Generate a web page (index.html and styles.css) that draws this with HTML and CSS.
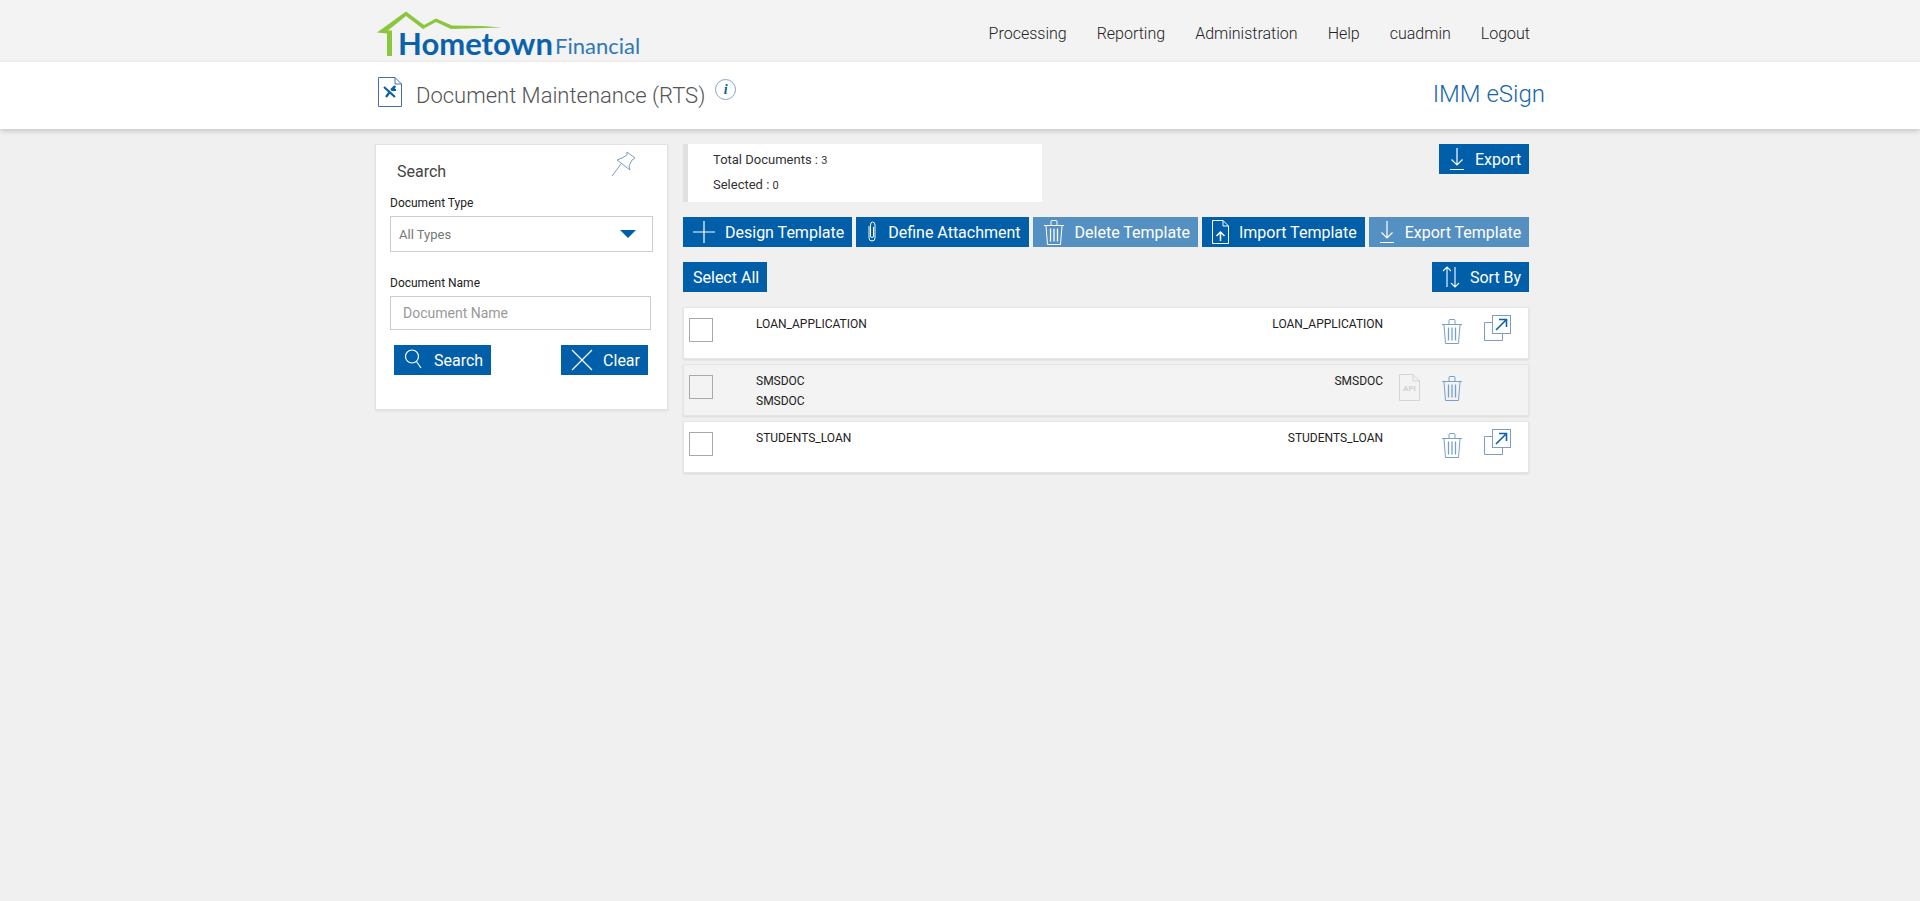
FILE: index.html
```html
<!DOCTYPE html>
<html lang="en">
<head>
    <meta charset="UTF-8">
    <title>Document Maintenance (RTS)</title>
    <link rel="stylesheet" href="styles.css">
</head>
<body>
    <svg class="icon-defs" width="0" height="0">
        <defs>
            <g id="i-trash" fill="none" stroke="currentColor" stroke-width="1">
                <path d="M1 6.5h20M3 7l1.500 18.500h13L19 7M8 6V2.500Q8 1.500 9 1.500h4Q14 1.500 14 2.500V6"/>
                <path d="M7.500 9.500v13M11 9.500v13M14.500 9.500v13" stroke-width="1.300"/>
            </g>
            <g id="i-down" fill="none" stroke="currentColor" stroke-width="1.200">
                <path d="M8 1v17M2.500 12.500L8 18l5.500-5.500M1 22.500h14"/>
            </g>
        </defs>
    </svg>

    <header class="topbar">
        <div class="wrap topbar-inner">
            <div class="logo">
                <svg class="logo-roof" width="125" height="46" viewBox="0 0 125 46">
                    <path d="M0 21.500L29 0.500L47 14L59 7.500L75 14.500L105 15L125 16.500L74 18L59 11L46 18L29 5L11 19.500L15 19.500V45H10V22.500Z" fill="#8cc63f"/>
                </svg>
                <span class="logo-main">Hometown</span>
                <span class="logo-sub">Financial</span>
            </div>
            <nav class="nav">
                <a>Processing</a>
                <a>Reporting</a>
                <a>Administration</a>
                <a>Help</a>
                <a>cuadmin</a>
                <a>Logout</a>
            </nav>
        </div>
    </header>

    <div class="titlebar">
        <div class="wrap titlebar-inner">
            <svg class="page-icon" width="24" height="30" viewBox="0 0 24 30">
                <path d="M.5.500H17L23.500 7V29.500H.5ZM17 .5V7H23.500" fill="#fff" stroke="#4a6da7"/>
                <path d="M6 10L17 20M8 20L11 16M13 13L17 9L15 13L18 13" fill="none" stroke="#0b5fa5" stroke-width="2.200"/>
            </svg>
            <h1 class="page-title">Document Maintenance (RTS)</h1>
            <span class="info-icon">i</span>
            <span class="product">IMM eSign</span>
        </div>
    </div>

    <main class="wrap content">
        <aside class="search-card">
            <div class="search-head">
                <span>Search</span>
                <svg class="pin" width="26" height="26" viewBox="0 0 26 26">
                    <path d="M16 1L24 7L21 9L18 15L19 19L6 9L11 7L16 4ZM10 13L1 25" fill="none" stroke="#7d9cc0"/>
                </svg>
            </div>
            <label class="field-label">Document Type</label>
            <div class="select-box">
                <span>All Types</span>
                <i class="caret"></i>
            </div>
            <label class="field-label second">Document Name</label>
            <input class="text-input" type="text" placeholder="Document Name">
            <div class="search-actions">
                <a class="btn">
                    <svg class="ico" width="20" height="24" viewBox="0 0 20 24">
                        <circle cx="8" cy="8.500" r="6.500" fill="none" stroke="currentColor" stroke-width="1.200"/>
                        <path d="M12.500 13.500L17 20" stroke="currentColor" stroke-width="1.200"/>
                    </svg>
                    Search
                </a>
                <a class="btn">
                    <svg class="ico" width="22" height="22" viewBox="0 0 22 22">
                        <path d="M1 1L21 21M21 1L1 21" stroke="currentColor" stroke-width="1.200"/>
                    </svg>
                    Clear
                </a>
            </div>
        </aside>

        <section class="docs">
            <div class="stats-row">
                <div class="stats">
                    <p>Total Documents : <small>3</small></p>
                    <p>Selected : <small>0</small></p>
                </div>
                <a class="btn">
                    <svg class="ico" width="16" height="24" viewBox="0 0 16 24"><use href="#i-down"/></svg>
                    Export
                </a>
            </div>

            <div class="toolbar">
                <a class="btn">
                    <svg class="ico" width="22" height="22" viewBox="0 0 22 22">
                        <path d="M11 0V22M0 11H22" stroke="currentColor" stroke-width="1.200"/>
                    </svg>
                    Design Template
                </a>
                <a class="btn">
                    <svg class="ico clip" width="12" height="24" viewBox="0 0 12 24">
                        <path d="M3 6V18Q3 21 6 21Q9 21 9 18V5Q9 2 6.500 2Q4.500 2 4.500 5V16Q4.500 17.500 6 17.500Q7.500 17.500 7.500 16V7" fill="none" stroke="currentColor"/>
                    </svg>
                    Define Attachment
                </a>
                <a class="btn off">
                    <svg class="ico" width="22" height="27" viewBox="0 0 22 27"><use href="#i-trash"/></svg>
                    Delete Template
                </a>
                <a class="btn">
                    <svg class="ico" width="17" height="24" viewBox="0 0 17 24">
                        <path d="M.5.500H11L16.500 6V23.500H.5ZM11 .5V6H16.500" fill="none" stroke="currentColor"/>
                        <path d="M8.500 21V12M4.500 16L8.500 12L12.500 16" fill="none" stroke="currentColor" stroke-width="1.500"/>
                    </svg>
                    Import Template
                </a>
                <a class="btn off">
                    <svg class="ico" width="16" height="24" viewBox="0 0 16 24"><use href="#i-down"/></svg>
                    Export Template
                </a>
            </div>

            <div class="select-row">
                <a class="btn">Select All</a>
                <a class="btn">
                    <svg class="ico" width="18" height="24" viewBox="0 0 18 24">
                        <path d="M5 22V2M1 6L5 2L9 6M13 2V22M9 18L13 22L17 18" fill="none" stroke="currentColor" stroke-width="1.100"/>
                    </svg>
                    Sort By
                </a>
            </div>

            <div class="doc-row">
                <i class="check"></i>
                <div class="doc-name"><p>LOAN_APPLICATION</p></div>
                <div class="doc-code">LOAN_APPLICATION</div>
                <span class="slot api-slot"></span>
                <svg class="trash" width="22" height="27" viewBox="0 0 22 27"><use href="#i-trash"/></svg>
                <span class="slot open-slot">
                    <svg width="27" height="27" viewBox="0 0 27 27">
                        <path d="M8 7.500H.5V25.500H18.500V19" fill="none" stroke="#7f9cc7"/>
                        <rect x="8.500" y=".5" width="18" height="18" fill="#fff" stroke="#7f9cc7"/>
                        <path d="M12 15L22 5M15 4.500H22.500V12" fill="none" stroke="#0b62a9" stroke-width="1.600"/>
                    </svg>
                </span>
            </div>

            <div class="doc-row alt">
                <i class="check"></i>
                <div class="doc-name"><p>SMSDOC</p><p>SMSDOC</p></div>
                <div class="doc-code">SMSDOC</div>
                <span class="slot api-slot">
                    <svg width="21" height="27" viewBox="0 0 21 27">
                        <path d="M.5.500H14L20.500 7V26.500H.5ZM14 .5V7H20.500" fill="none" stroke="#d5d5d5"/>
                        <text x="10.500" y="17" class="api-text">API</text>
                    </svg>
                </span>
                <svg class="trash" width="22" height="27" viewBox="0 0 22 27"><use href="#i-trash"/></svg>
                <span class="slot open-slot"></span>
            </div>

            <div class="doc-row">
                <i class="check"></i>
                <div class="doc-name"><p>STUDENTS_LOAN</p></div>
                <div class="doc-code">STUDENTS_LOAN</div>
                <span class="slot api-slot"></span>
                <svg class="trash" width="22" height="27" viewBox="0 0 22 27"><use href="#i-trash"/></svg>
                <span class="slot open-slot">
                    <svg width="27" height="27" viewBox="0 0 27 27">
                        <path d="M8 7.500H.5V25.500H18.500V19" fill="none" stroke="#7f9cc7"/>
                        <rect x="8.500" y=".5" width="18" height="18" fill="#fff" stroke="#7f9cc7"/>
                        <path d="M12 15L22 5M15 4.500H22.500V12" fill="none" stroke="#0b62a9" stroke-width="1.600"/>
                    </svg>
                </span>
            </div>
        </section>
    </main>
</body>
</html>
```

FILE: styles.css
```css
* {
    box-sizing: border-box;
}

body {
    margin: 0;
    min-height: 901px;
    background-color: #f0f0f0;
    font-family: Roboto, "Liberation Sans", sans-serif;
    color: #333;
}

p {
    margin: 0;
}

.icon-defs {
    position: absolute;
}

.wrap {
    width: 1170px;
    margin-left: 375px;
}

/* top header */
.topbar {
    height: 62px;
    background-color: #f3f3f3;
}

.topbar-inner {
    display: flex;
    justify-content: space-between;
    height: 62px;
}

.logo {
    position: relative;
    width: 270px;
    height: 62px;
    white-space: nowrap;
}

.logo-roof {
    position: absolute;
    left: 2px;
    top: 11px;
}

.logo-main {
    position: absolute;
    left: 23px;
    top: 24px;
    font-family: Lato, sans-serif;
    font-weight: 700;
    font-size: 31px;
    line-height: 38px;
    color: #0b62ac;
}

.logo-sub {
    position: absolute;
    left: 180px;
    top: 31px;
    font-family: Lato, sans-serif;
    font-size: 22px;
    line-height: 29px;
    color: #2f78b7;
}

.nav {
    display: flex;
    gap: 30px;
    padding: 24px 15px 0 0;
    font-size: 16px;
    font-weight: 300;
    line-height: 19px;
    color: #222;
}

/* page title band */
.titlebar {
    height: 67px;
    background-color: #fff;
    box-shadow: 0 2px 5px rgba(0, 0, 0, 0.18);
}

.titlebar-inner {
    display: flex;
    height: 67px;
    position: relative;
}

.page-icon {
    margin: 15px 0 0 3px;
}

.page-title {
    margin: 20px 0 0 14px;
    font-size: 22px;
    font-weight: 300;
    line-height: 27px;
    color: #555;
}

.info-icon {
    width: 21px;
    height: 21px;
    margin: 17px 0 0 10px;
    border: 1px solid #7fa6cc;
    border-radius: 50%;
    font-family: "Liberation Serif", serif;
    font-style: italic;
    font-weight: 700;
    font-size: 14px;
    line-height: 19px;
    text-align: center;
    color: #0b5fa5;
}

.product {
    margin: 18px 0 0 auto;
    font-size: 24px;
    font-weight: 300;
    line-height: 29px;
    color: #1766ad;
}

/* main area */
.content {
    display: flex;
    align-items: flex-start;
    gap: 15px;
    padding-top: 15px;
}

.search-card {
    width: 293px;
    height: 266px;
    padding: 0 15px;
    background-color: #fff;
    border: 1px solid #e3e3e3;
    box-shadow: 0 1px 2px rgba(0, 0, 0, 0.08);
}

.search-head {
    display: flex;
    justify-content: space-between;
    height: 51px;
    padding: 17px 15px 0 6px;
    font-size: 16px;
    line-height: 19px;
    color: #444;
}

.pin {
    margin-top: -11px;
}

.field-label {
    display: block;
    margin: 0 -1px;
    font-size: 12px;
    line-height: 15px;
    color: #222;
}

.field-label.second {
    margin-top: 24px;
}

.select-box {
    display: flex;
    align-items: center;
    justify-content: space-between;
    height: 36px;
    margin: 5px -1px 0;
    padding: 0 16px 0 8px;
    border: 1px solid #ccc;
    font-size: 13px;
    color: #777;
}

.caret {
    width: 0;
    height: 0;
    border-left: 8px solid transparent;
    border-right: 8px solid transparent;
    border-top: 8px solid #015ea8;
}

.text-input {
    display: block;
    width: 261px;
    height: 34px;
    margin: 5px -1px 0;
    padding: 0 12px;
    border: 1px solid #ccc;
    outline: none;
    font-family: Roboto, sans-serif;
    font-size: 14px;
}

.text-input::placeholder {
    color: #999;
}

.search-actions {
    display: flex;
    justify-content: space-between;
    margin-top: 15px;
    padding: 0 4px 0 3px;
}

.btn {
    display: inline-flex;
    align-items: center;
    height: 30px;
    padding: 0 8px 0 10px;
    gap: 10px;
    background-color: #015ea8;
    font-size: 16px;
    white-space: nowrap;
    color: #fff;
}

.btn.off {
    background-color: #5590c2;
}

.ico {
    flex: none;
}

.stats-row,
.select-row {
    display: flex;
    justify-content: space-between;
    align-items: flex-start;
}

.stats {
    width: 359px;
    height: 58px;
    padding: 4px 0 0 25px;
    background-color: #fff;
    border-left: 5px solid #e0e0e0;
    font-size: 13px;
    line-height: 24px;
}

.stats small {
    font-size: 11px;
}

.toolbar {
    display: flex;
    gap: 4px;
    margin-top: 15px;
}

.select-row {
    margin: 15px 0;
}

.doc-row {
    display: flex;
    align-items: flex-start;
    height: 52px;
    margin-bottom: 5px;
    background-color: #fff;
    border: 1px solid #e5e5e5;
    box-shadow: 0 1px 2px rgba(0, 0, 0, 0.1);
    font-size: 12px;
    color: #222;
}

.doc-row.alt {
    background-color: #f3f3f3;
}

.check {
    flex: none;
    width: 24px;
    height: 24px;
    margin: 10px 0 0 5px;
    background-color: transparent;
    border: 1px solid #aaa;
}

.doc-name {
    flex: 1;
    margin: 6px 0 0 43px;
    line-height: 20px;
}

.doc-code {
    margin-top: 6px;
    line-height: 20px;
    text-align: right;
}

.slot {
    flex: none;
    display: block;
}

.api-slot {
    width: 21px;
    margin: 9px 0 0 16px;
}

.trash {
    flex: none;
    margin: 10px 0 0 21px;
    color: #7aa0c8;
}

.open-slot {
    width: 27px;
    margin: 7px 0 0 21px;
    padding-right: 0;
}

.doc-row > .open-slot {
    margin-right: 17px;
}

.api-text {
    font-family: Roboto, sans-serif;
    font-weight: 700;
    font-size: 8px;
    text-anchor: middle;
    fill: #d0d0d0;
}
```
